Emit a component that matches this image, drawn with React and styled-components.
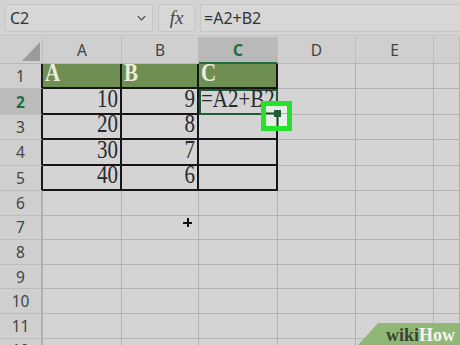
import React from "react";
import styled, { createGlobalStyle } from "styled-components";

const GlobalStyle = createGlobalStyle`
  html, body {
    margin: 0;
    padding: 0;
    background: #d3d3d3;
  }
`;

const columns = ["A", "B", "C", "D", "E", ""];
const tableRows = [
  ["A", "B", "C"],
  [10, 9, "=A2+B2"],
  [20, 8, ""],
  [30, 7, ""],
  [40, 6, ""],
];
const rowCount = 12;

function App() {
  const rows = [];
  for (let r = 1; r <= rowCount; r++) {
    rows.push(
      <RowHead key={"h" + r} $active={r === 2} $edge={r <= 5}>
        {r}
      </RowHead>
    );
    columns.forEach((col, c) => {
      const inTable = r <= 5 && c < 3;
      const value = inTable ? tableRows[r - 1][c] : "";
      const isActive = r === 2 && c === 2;
      rows.push(
        <Cell
          key={r + "-" + c}
          $inTable={inTable}
          $green={r === 1 && c < 3}
          $number={typeof value === "number"}
          $active={isActive}
        >
          {value !== "" && <CellText>{value}</CellText>}
          {isActive && (
            <FillHandle>
              <svg width="31" height="30" viewBox="0 0 31 30">
                <rect x="2.5" y="2.5" width="26" height="25" fill="#e6ece6" stroke="#27e22a" strokeWidth="5" />
                <line x1="5" y1="12.5" x2="16" y2="12.5" stroke="#1e3a28" strokeWidth="2" />
                <line x1="16.5" y1="12" x2="16.5" y2="25" stroke="#1e3a28" strokeWidth="2" />
                <line x1="20" y1="12.5" x2="26" y2="12.5" stroke="#b5b5b5" strokeWidth="1" />
                <rect x="13" y="9" width="7" height="7" fill="#1d5c37" />
              </svg>
            </FillHandle>
          )}
        </Cell>
      );
    });
  }

  return (
    <Page>
      <GlobalStyle />
      <Toolbar>
        <NameBox>
          C2
          <Chevron viewBox="0 0 10 6">
            <path d="M1 1 L5 5 L9 1" fill="none" stroke="#444" strokeWidth="1.3" />
          </Chevron>
        </NameBox>
        <FxBox>fx</FxBox>
        <FormulaBox>=A2+B2</FormulaBox>
      </Toolbar>
      <Sheet>
        <Corner>
          <CornerTriangle />
        </Corner>
        {columns.map((col, i) => (
          <ColHead key={i} $active={col === "C"}>
            {col}
          </ColHead>
        ))}
        {rows}
        <CursorPlus />
      </Sheet>
      <Logo>
        <LogoWiki>wiki</LogoWiki>
        <LogoHow>How</LogoHow>
      </Logo>
    </Page>
  );
}

const Page = styled.div`
  position: relative;
  width: 460px;
  height: 345px;
  overflow: hidden;
  background: #d3d3d3;
  font-family: "Noto Sans", "Open Sans", sans-serif;
`;

const Toolbar = styled.div`
  display: flex;
  align-items: center;
  gap: 5px;
  height: 36px;
  padding: 0 0 0 5px;
  box-sizing: border-box;
  border-bottom: 1px solid #c4c4c4;
`;

const Box = styled.div`
  display: flex;
  align-items: center;
  height: 28px;
  box-sizing: border-box;
  background: #d7d7d7;
  border: 1px solid #c6c6c6;
  color: #333;
  font-size: 16px;
`;

const NameBox = styled(Box)`
  width: 148px;
  padding: 0 6px 0 4px;
  justify-content: space-between;
`;

const Chevron = styled.svg`
  width: 9px;
  height: 6px;
`;

const FxBox = styled(Box)`
  width: 37px;
  justify-content: center;
  font-family: "Liberation Serif", serif;
  font-style: italic;
  font-size: 19px;
  color: #444;
`;

const FormulaBox = styled(Box)`
  flex: 1;
  padding-left: 3px;
  border-right: none;
`;

const Sheet = styled.div`
  position: relative;
  display: grid;
  grid-template-columns: 43px 79px 77px 79px 78px 78px 1fr;
  grid-template-rows: 27px repeat(5, 25.4px) repeat(7, 24.6px);
  margin-top: 1px;
`;

const Corner = styled.div`
  position: relative;
  background: #cfcfcf;
  border-right: 1px solid #bcbcbc;
  border-bottom: 1px solid #b8b8b8;
`;

const CornerTriangle = styled.div`
  position: absolute;
  right: 2px;
  bottom: 2px;
  width: 18px;
  height: 19px;
  background: #9b9b9b;
  clip-path: polygon(100% 0, 100% 100%, 0 100%);
`;

const ColHead = styled.div`
  display: flex;
  align-items: center;
  justify-content: center;
  box-sizing: border-box;
  background: ${(p) => (p.$active ? "#b9b9b9" : "#cfcfcf")};
  border-right: 1px solid #bcbcbc;
  border-bottom: ${(p) => (p.$active ? "2px solid #1f6b3f" : "1px solid #b8b8b8")};
  color: ${(p) => (p.$active ? "#1f6b3f" : "#444")};
  font-weight: ${(p) => (p.$active ? 700 : 400)};
  font-size: 15.5px;
`;

const RowHead = styled.div`
  display: flex;
  align-items: center;
  justify-content: center;
  box-sizing: border-box;
  background: ${(p) => (p.$active ? "#bcbcbc" : "#cfcfcf")};
  border-right: ${(p) => (p.$edge ? "2px solid #1a1a1a" : "2px solid #b0b0b0")};
  border-bottom: 1px solid #bdbdbd;
  color: ${(p) => (p.$active ? "#1f6b3f" : "#444")};
  font-weight: ${(p) => (p.$active ? 700 : 400)};
  font-size: 15.5px;
`;

const Cell = styled.div`
  position: ${(p) => (p.$active ? "relative" : "static")};
  z-index: ${(p) => (p.$active ? 1 : "auto")};
  display: flex;
  align-items: flex-end;
  justify-content: ${(p) => (p.$number ? "flex-end" : "flex-start")};
  box-sizing: border-box;
  padding: 0 2px 1px 2px;
  white-space: nowrap;
  background: ${(p) => (p.$green ? "#6f8f52" : "#d4d4d4")};
  border-right: ${(p) => (p.$inTable ? "2px solid #161616" : "1px solid #b3b3b3")};
  border-bottom: ${(p) => (p.$inTable ? "2px solid #161616" : "1px solid #b3b3b3")};
  box-shadow: ${(p) => (p.$active ? "inset 2px 2px 0 #1d5c37" : "none")};
  ${(p) => p.$active && "border-color: #1d5c37;"}
  color: ${(p) => (p.$green ? "#ecebdc" : "#2a2a2a")};
  font-family: "Liberation Serif", serif;
  font-weight: ${(p) => (p.$green ? 700 : 400)};
  font-size: 21px;
  line-height: 22px;
`;

const CellText = styled.span`
  display: inline-block;
  transform: scaleY(1.15);
  transform-origin: bottom;
`;

const FillHandle = styled.div`
  position: absolute;
  left: 62px;
  top: 12px;
  width: 31px;
  height: 30px;
  z-index: 2;
  svg {
    display: block;
  }
`;

const CursorPlus = styled.div`
  position: absolute;
  left: 183px;
  top: 181px;
  width: 9px;
  height: 9px;
  background:
    linear-gradient(#111, #111) center / 9px 2px no-repeat,
    linear-gradient(#111, #111) center / 2px 9px no-repeat;
`;

const Logo = styled.div`
  position: absolute;
  right: 0;
  bottom: 0;
  width: 102px;
  height: 22px;
  box-sizing: border-box;
  padding: 0 3px 0 28px;
  display: flex;
  align-items: flex-end;
  background: #91b777;
  clip-path: polygon(20px 0, 100% 0, 100% 100%, 0 100%);
  border-top-left-radius: 4px;
  font-family: "Liberation Serif", serif;
  font-weight: 700;
  font-size: 18px;
  line-height: 20px;
`;

const LogoWiki = styled.span`
  color: #39432f;
`;

const LogoHow = styled.span`
  color: #f5f5f0;
`;

export default App;
